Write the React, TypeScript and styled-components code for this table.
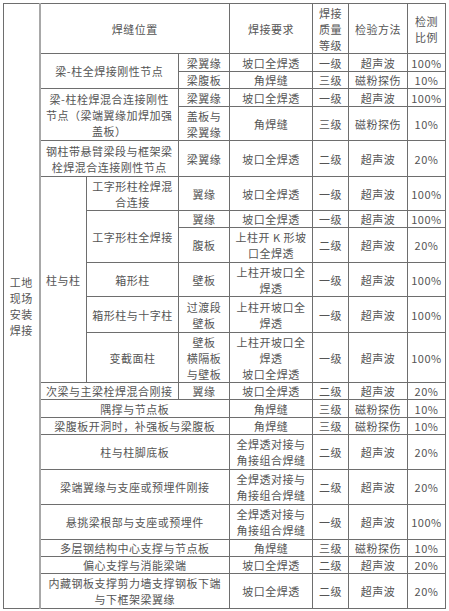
import React from "react";
import styled, { createGlobalStyle } from "styled-components";

const Global = createGlobalStyle`
  html, body { margin: 0; padding: 0; background: #ffffff; }
  body { font-family: "Noto Sans CJK SC", "Noto Sans", sans-serif; }
`;

const Page = styled.div`
  padding: 3px 0 0 3px;
  width: 449px;
  height: 611px;
  box-sizing: border-box;
  overflow: hidden;
`;

const Table = styled.table`
  border-collapse: collapse;
  table-layout: fixed;
  width: 442px;
  border: 1px solid #3c3c3c;
  color: #555555;
  font-size: 11px;
  line-height: 16px;
  letter-spacing: 0.5px;
`;

const Row = styled.tr<{ $h: number }>`
  height: ${(p) => p.$h}px;
`;

const Cell = styled.td<{ $thick?: boolean }>`
  border: 1px solid #6e6e6e;
  ${(p) => (p.$thick ? "border-right: 2px solid #a8a8a8;" : "")}
  padding: 0 1px;
  text-align: center;
  vertical-align: middle;
  white-space: nowrap;
  overflow: hidden;
`;

const widths = [36, 47, 92, 51, 83, 36, 59, 38];

type R = [string, string, string, string];

const rest = (r: R) => (
  <>
    <Cell>{r[0]}</Cell>
    <Cell>{r[1]}</Cell>
    <Cell>{r[2]}</Cell>
    <Cell>{r[3]}</Cell>
  </>
);

const Lines = ({ t }: { t: string }) => (
  <>
    {t.split("\n").map((l, i) => (
      <React.Fragment key={i}>
        {i > 0 && <br />}
        {l}
      </React.Fragment>
    ))}
  </>
);

const full: [number, string, R][] = [
  [18, "隅撑与节点板", ["角焊缝", "三级", "磁粉探伤", "10%"]],
  [17, "梁腹板开洞时，补强板与梁腹板", ["角焊缝", "三级", "磁粉探伤", "10%"]],
  [35, "柱与柱脚底板", ["全焊透对接与\n角接组合焊缝", "二级", "超声波", "20%"]],
  [35, "梁端翼缘与支座或预埋件刚接", ["全焊透对接与\n角接组合焊缝", "二级", "超声波", "20%"]],
  [35, "悬挑梁根部与支座或预埋件", ["全焊透对接与\n角接组合焊缝", "一级", "超声波", "100%"]],
  [17, "多层钢结构中心支撑与节点板", ["角焊缝", "三级", "磁粉探伤", "10%"]],
  [17, "偏心支撑与消能梁端", ["坡口全焊透", "二级", "超声波", "20%"]],
  [35, "内藏钢板支撑剪力墙支撑钢板下端\n与下框架梁翼缘", ["坡口全焊透", "二级", "超声波", "20%"]],
];

export default function App() {
  const r = (a: string, b: string, c: string, d: string): R => [a, b, c, d];
  const rr = (x: R) => (
    <>
      <Cell>
        <Lines t={x[0]} />
      </Cell>
      <Cell>{x[1]}</Cell>
      <Cell>{x[2]}</Cell>
      <Cell>{x[3]}</Cell>
    </>
  );
  return (
    <Page>
      <Global />
      <Table>
        <colgroup>
          {widths.map((w, i) => (
            <col key={i} style={{ width: w }} />
          ))}
        </colgroup>
        <tbody>
          <Row $h={50}>
            <Cell rowSpan={21} $thick>
              工地<br />现场<br />安装<br />焊接
            </Cell>
            <Cell colSpan={3}>焊缝位置</Cell>
            <Cell>焊接要求</Cell>
            <Cell>
              焊接<br />质量<br />等级
            </Cell>
            <Cell>检验方法</Cell>
            <Cell>
              检测<br />比例
            </Cell>
          </Row>
          <Row $h={18}>
            <Cell colSpan={2} rowSpan={2}>梁-柱全焊接刚性节点</Cell>
            <Cell>梁翼缘</Cell>
            {rest(r("坡口全焊透", "一级", "超声波", "100%"))}
          </Row>
          <Row $h={17}>
            <Cell>梁腹板</Cell>
            {rest(r("角焊缝", "三级", "磁粉探伤", "10%"))}
          </Row>
          <Row $h={18}>
            <Cell colSpan={2} rowSpan={2}>
              梁-柱栓焊混合连接刚性<br />节点（梁端翼缘加焊加强<br />盖板）
            </Cell>
            <Cell>梁翼缘</Cell>
            {rest(r("坡口全焊透", "一级", "超声波", "100%"))}
          </Row>
          <Row $h={34}>
            <Cell>
              盖板与<br />梁翼缘
            </Cell>
            {rest(r("角焊缝", "三级", "磁粉探伤", "10%"))}
          </Row>
          <Row $h={36}>
            <Cell colSpan={2}>
              钢柱带悬臂梁段与框架梁<br />栓焊混合连接刚性节点
            </Cell>
            <Cell>梁翼缘</Cell>
            {rest(r("坡口全焊透", "二级", "超声波", "20%"))}
          </Row>
          <Row $h={34}>
            <Cell rowSpan={6}>柱与柱</Cell>
            <Cell>
              工字形柱栓焊混<br />合连接
            </Cell>
            <Cell>翼缘</Cell>
            {rest(r("坡口全焊透", "一级", "超声波", "100%"))}
          </Row>
          <Row $h={17}>
            <Cell rowSpan={2}>工字形柱全焊接</Cell>
            <Cell>翼缘</Cell>
            {rest(r("坡口全焊透", "一级", "超声波", "100%"))}
          </Row>
          <Row $h={35}>
            <Cell>腹板</Cell>
            {rr(r("上柱开 K 形坡\n口全焊透", "二级", "超声波", "20%"))}
          </Row>
          <Row $h={34}>
            <Cell>箱形柱</Cell>
            <Cell>壁板</Cell>
            {rr(r("上柱开坡口全\n焊透", "一级", "超声波", "100%"))}
          </Row>
          <Row $h={36}>
            <Cell>箱形柱与十字柱</Cell>
            <Cell>
              过渡段<br />壁板
            </Cell>
            {rr(r("上柱开坡口全\n焊透", "一级", "超声波", "100%"))}
          </Row>
          <Row $h={50}>
            <Cell>变截面柱</Cell>
            <Cell>
              壁板<br />横隔板<br />与壁板
            </Cell>
            {rr(r("上柱开坡口全\n焊透\n坡口全焊透", "一级", "超声波", "100%"))}
          </Row>
          <Row $h={17}>
            <Cell colSpan={2}>次梁与主梁栓焊混合刚接</Cell>
            <Cell>翼缘</Cell>
            {rest(r("坡口全焊透", "二级", "超声波", "20%"))}
          </Row>
          {full.map(([h, label, vals], i) => (
            <Row $h={h} key={i}>
              <Cell colSpan={3}>
                <Lines t={label} />
              </Cell>
              {rr(vals)}
            </Row>
          ))}
        </tbody>
      </Table>
    </Page>
  );
}
